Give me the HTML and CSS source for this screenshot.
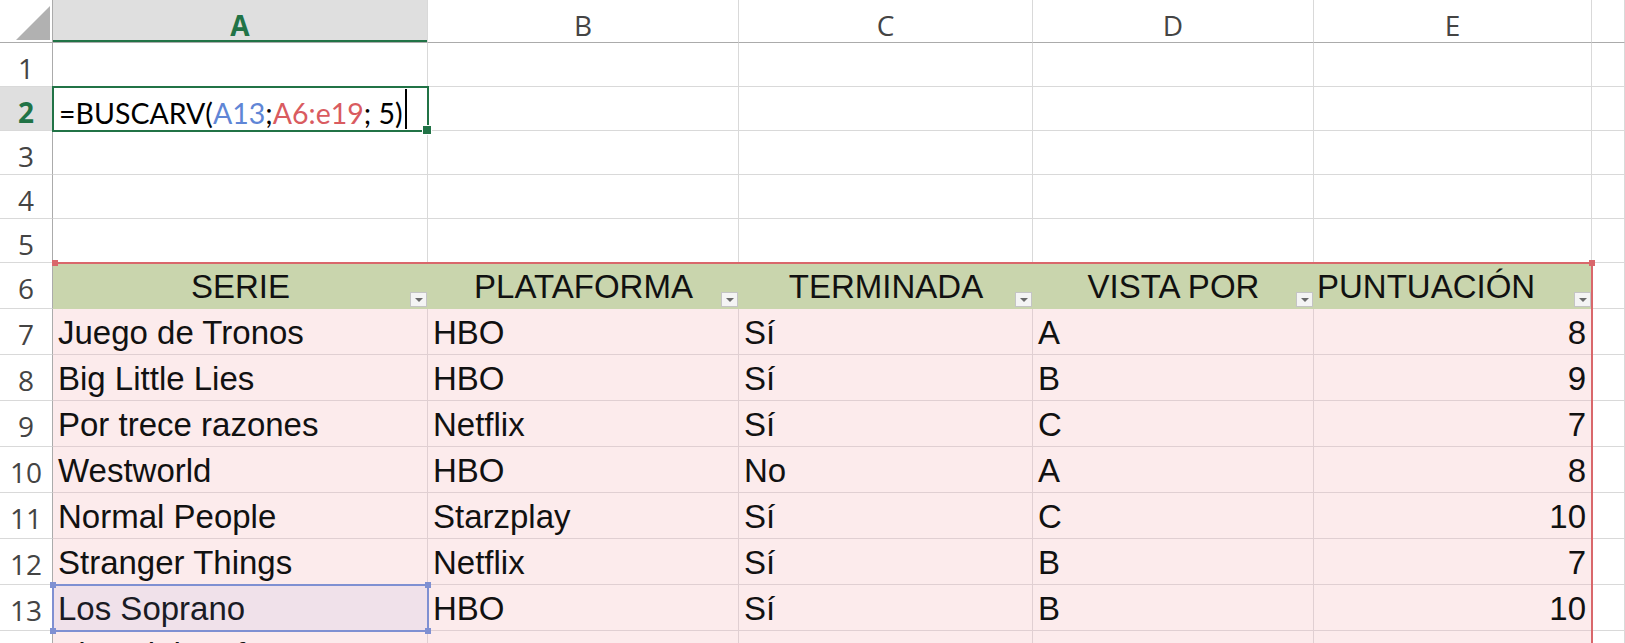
FILE: index.html
```html
<!DOCTYPE html>
<html lang="es">
<head>
  <meta charset="UTF-8">
  <title>BUSCARV - Series</title>
  <link rel="stylesheet" href="styles.css">
</head>
<body>
  <div class="sheet">
    <div class="cells">
      <!-- column headers -->
      <div class="corner"></div>
      <div class="col-head active">A</div>
      <div class="col-head">B</div>
      <div class="col-head">C</div>
      <div class="col-head">D</div>
      <div class="col-head">E</div>
      <div class="col-head"></div>

      <div class="row-head">1</div>
      <div class="cell"></div><div class="cell"></div><div class="cell"></div><div class="cell"></div><div class="cell"></div><div class="cell"></div>

      <div class="row-head active">2</div>
      <div class="cell formula">=BUSCARV(<span class="ref-blue">A13</span>;<span class="ref-red">A6:e19</span>; 5)<span class="caret"></span></div>
      <div class="cell"></div><div class="cell"></div><div class="cell"></div><div class="cell"></div><div class="cell"></div>

      <div class="row-head">3</div>
      <div class="cell"></div><div class="cell"></div><div class="cell"></div><div class="cell"></div><div class="cell"></div><div class="cell"></div>

      <div class="row-head">4</div>
      <div class="cell"></div><div class="cell"></div><div class="cell"></div><div class="cell"></div><div class="cell"></div><div class="cell"></div>

      <div class="row-head">5</div>
      <div class="cell"></div><div class="cell"></div><div class="cell"></div><div class="cell"></div><div class="cell"></div><div class="cell"></div>

      <!-- table -->
      <div class="row-head">6</div>
      <div class="th">SERIE<span class="filter"></span></div>
      <div class="th">PLATAFORMA<span class="filter"></span></div>
      <div class="th">TERMINADA<span class="filter"></span></div>
      <div class="th">VISTA POR<span class="filter"></span></div>
      <div class="th th-left">PUNTUACIÓN<span class="filter"></span></div>
      <div class="cell"></div>

      <div class="row-head">7</div>
      <div class="td">Juego de Tronos</div><div class="td">HBO</div><div class="td">Sí</div><div class="td">A</div><div class="td num">8</div>
      <div class="cell"></div>

      <div class="row-head">8</div>
      <div class="td">Big Little Lies</div><div class="td">HBO</div><div class="td">Sí</div><div class="td">B</div><div class="td num">9</div>
      <div class="cell"></div>

      <div class="row-head">9</div>
      <div class="td">Por trece razones</div><div class="td">Netflix</div><div class="td">Sí</div><div class="td">C</div><div class="td num">7</div>
      <div class="cell"></div>

      <div class="row-head">10</div>
      <div class="td">Westworld</div><div class="td">HBO</div><div class="td">No</div><div class="td">A</div><div class="td num">8</div>
      <div class="cell"></div>

      <div class="row-head">11</div>
      <div class="td">Normal People</div><div class="td">Starzplay</div><div class="td">Sí</div><div class="td">C</div><div class="td num">10</div>
      <div class="cell"></div>

      <div class="row-head">12</div>
      <div class="td">Stranger Things</div><div class="td">Netflix</div><div class="td">Sí</div><div class="td">B</div><div class="td num">7</div>
      <div class="cell"></div>

      <div class="row-head">13</div>
      <div class="td">Los Soprano</div><div class="td">HBO</div><div class="td">Sí</div><div class="td">B</div><div class="td num">10</div>
      <div class="cell"></div>

      <div class="row-head">14</div>
      <div class="td">The Night Of</div><div class="td">HBO</div><div class="td">No</div><div class="td">A</div><div class="td num">7</div>
      <div class="cell"></div>
    </div>

    <!-- selection and reference borders drawn over the cells -->
    <div class="marks">
      <div class="sel-active"></div>
      <div class="sel-range"></div>
      <div class="sel-ref">
        <span class="handle tl"></span><span class="handle tr"></span>
        <span class="handle bl"></span><span class="handle br"></span>
      </div>
    </div>
  </div>
</body>
</html>
```

FILE: styles.css
```css
* {
  box-sizing: border-box;
}
html, body {
  margin: 0;
  height: 100%;
  overflow: hidden;
  background: #fff;
}
.sheet {
  display: grid;
}
.cells, .marks {
  grid-area: 1 / 1;
  display: grid;
  grid-template-columns: 53px 375px 311px 294px 281px 278px 1fr;
  grid-template-rows: 43px repeat(5, 44px) repeat(9, 46px);
}
.marks {
  pointer-events: none;
}

/* headers */
.corner {
  position: relative;
  border-right: 1px solid #ababab;
  border-bottom: 1px solid #ababab;
}
.corner::after {
  content: '';
  position: absolute;
  right: 2px;
  bottom: 2px;
  width: 0;
  height: 0;
  border-left: 34px solid transparent;
  border-bottom: 34px solid #b1b1b1;
}
.col-head, .row-head {
  font-family: "Open Sans", sans-serif;
  font-size: 28px;
  line-height: 28px;
  padding-top: 11px;
  color: #444;
  text-align: center;
}
.col-head {
  border-right: 1px solid #d9d9d9;
  border-bottom: 1px solid #ababab;
}
.row-head {
  border-right: 1px solid #ababab;
  border-bottom: 1px solid #d9d9d9;
}
.col-head.active, .row-head.active {
  background: #dfdfdf;
  color: #217346;
  font-weight: 700;
}
.col-head.active {
  box-shadow: inset 0 -2px 0 #217346;
}

/* cells */
.cell {
  border-right: 1px solid #d9d9d9;
  border-bottom: 1px solid #d9d9d9;
}
.formula {
  font-family: Lato, sans-serif;
  font-size: 28.5px;
  line-height: 29px;
  padding: 12px 0 0 6px;
  color: #000;
  white-space: nowrap;
}
.ref-blue {
  color: #5f86d6;
}
.ref-red {
  color: #d95b60;
}
.caret {
  display: inline-block;
  width: 2px;
  height: 40px;
  margin-top: -40px;
  margin-left: 2px;
  vertical-align: -5px;
  background: #000;
}

/* table */
.th, .td {
  font-family: "Liberation Sans", Arial, sans-serif;
  font-size: 33px;
  color: #111;
  white-space: nowrap;
  overflow: hidden;
}
.th {
  position: relative;
  background: #c9d5ad;
  line-height: 45px;
  padding-top: 1px;
  text-align: center;
}
.th-left {
  text-align: left;
  padding-left: 3px;
}
.filter {
  position: absolute;
  right: 1px;
  bottom: 2px;
  width: 17px;
  height: 15px;
  border: 1px solid #c4c4c4;
  background: #f4f4f4;
}
.filter::after {
  content: '';
  position: absolute;
  left: 4px;
  top: 5px;
  border-left: 4px solid transparent;
  border-right: 4px solid transparent;
  border-top: 4px solid #6a6a6a;
}
.td {
  background: #fcebec;
  border-right: 1px solid #e0cfd2;
  border-bottom: 1px solid #e0cfd2;
  line-height: 45px;
  padding: 1px 5px 0;
}
.td.num {
  text-align: right;
}

/* selection marks */
.sel-active {
  position: relative;
  grid-column: 2 / 3;
  grid-row: 3 / 4;
  margin: -1px;
  border: 2px solid #217346;
}
.sel-active::after {
  content: '';
  position: absolute;
  right: -5px;
  bottom: -5px;
  width: 8px;
  height: 8px;
  background: #217346;
  border: 1px solid #fff;
}
.sel-range {
  position: relative;
  grid-column: 2 / 7;
  grid-row: 7 / 16;
  margin: -1px -1px 0 0;
  border-top: 2px solid #d9676b;
  border-right: 2px solid #d9676b;
}
.sel-range::before, .sel-range::after {
  content: '';
  position: absolute;
  top: -4px;
  width: 6px;
  height: 6px;
  background: #d9676b;
}
.sel-range::before {
  left: -1px;
}
.sel-range::after {
  right: -4px;
}
.sel-ref {
  position: relative;
  grid-column: 2 / 3;
  grid-row: 14 / 15;
  margin: -1px;
  border: 2px solid #7f90d2;
  background: rgba(120, 130, 220, 0.09);
}
.handle {
  position: absolute;
  width: 6px;
  height: 6px;
  background: #7f90d2;
}
.handle.tl { left: -4px; top: -4px; }
.handle.tr { right: -4px; top: -4px; }
.handle.bl { left: -4px; bottom: -4px; }
.handle.br { right: -4px; bottom: -4px; }
```
